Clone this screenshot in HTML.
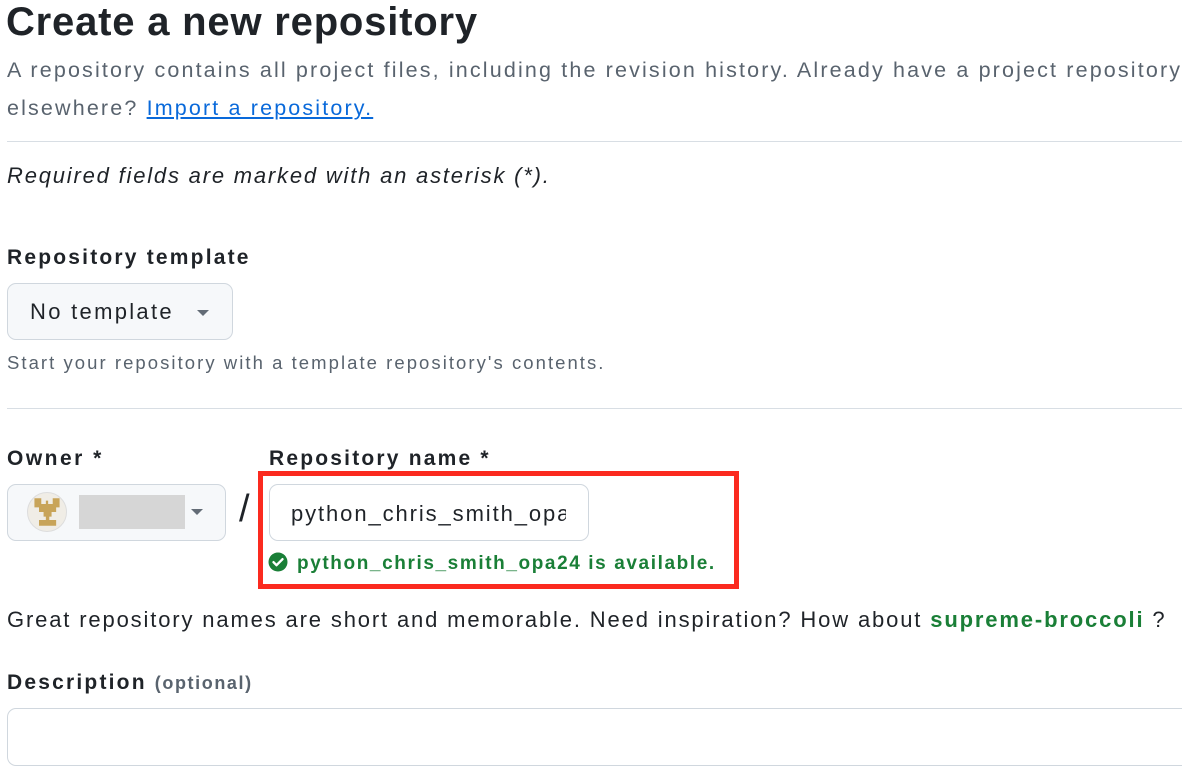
<!DOCTYPE html>
<html><head><meta charset="utf-8"><style>
*{margin:0;padding:0;box-sizing:border-box}
body{width:1182px;height:784px;overflow:hidden;background:#fff;font-family:"Liberation Sans",Arial,sans-serif;color:#1f2328;position:relative}
.a{position:absolute;line-height:1;white-space:nowrap;letter-spacing:2px}
.hr{position:absolute;left:7px;right:0;height:1px;background:#d8dee4}
.b{font-weight:bold}
.box{position:absolute;border:1px solid #d0d7de;border-radius:9px}
.caret{position:absolute;width:0;height:0;border-left:6px solid transparent;border-right:6px solid transparent;border-top:6px solid #636c76}
</style></head><body>
<div class="a b" style="left:6px;top:2px;font-size:40px;letter-spacing:0.8px">Create a new repository</div>
<div class="a" style="left:7px;top:60px;font-size:21.5px;color:#59636e;letter-spacing:2.15px">A repository contains all project files, including the revision history. Already have a project repository</div>
<div class="a" style="left:7px;top:98px;font-size:21.5px;color:#59636e;letter-spacing:2.15px">elsewhere? <span style="color:#0969da;text-decoration:underline">Import a repository.</span></div>
<div class="hr" style="top:141px"></div>
<div class="a" style="left:7px;top:165px;font-size:22px;font-style:italic;letter-spacing:1.8px">Required fields are marked with an asterisk (*).</div>
<div class="a b" style="left:7px;top:247px;font-size:21px;letter-spacing:2.2px">Repository template</div>
<div class="box" style="left:7px;top:283px;width:226px;height:57px;background:#f6f8fa"></div>
<div class="a" style="left:30px;top:301px;font-size:22px;letter-spacing:2.3px">No template</div>
<div class="caret" style="left:197px;top:310px"></div>
<div class="a" style="left:7px;top:354px;font-size:18.5px;color:#59636e;letter-spacing:2.05px">Start your repository with a template repository's contents.</div>
<div class="hr" style="top:408px"></div>
<div class="a b" style="left:7px;top:448px;font-size:21px;letter-spacing:2.5px">Owner *</div>
<div class="a b" style="left:269px;top:448px;font-size:21px;letter-spacing:2.2px">Repository name *</div>
<div class="box" style="left:7px;top:484px;width:219px;height:57px;background:#f6f8fa"></div>
<div style="position:absolute;left:27px;top:492px;width:40px;height:40px;border-radius:50%;background:#f0ede6;border:1px solid #ddd"></div>
<svg style="position:absolute;left:31px;top:496px" width="32" height="32" viewBox="0 0 28 28"><path fill="#c8a459" d="M3 2h6v5h4v-3h2v3h4V2h6v8h-3v4h-4v4h-2v3h6v5H7v-5h6v-3h-2v-4H7v-4H3z"/></svg>
<div style="position:absolute;left:79px;top:495px;width:106px;height:34px;background:#d6d6d6"></div>
<div class="caret" style="left:191px;top:509px"></div>
<div class="a" style="left:239px;top:490px;font-size:38px">/</div>
<div style="position:absolute;left:258px;top:471px;width:481px;height:118px;border:5px solid #fb2a1f"></div>
<div class="box" style="left:269px;top:484px;width:320px;height:57px;background:#fff;overflow:hidden"><div style="position:absolute;left:21px;top:0;width:275px;height:55px;overflow:hidden"><div class="a" style="left:0;top:18px;font-size:22px;letter-spacing:1.9px">python_chris_smith_opa24</div></div></div>
<svg style="position:absolute;left:268px;top:552px" width="20" height="20" viewBox="0 0 20 20"><circle cx="10" cy="10" r="9.5" fill="#1a7f37"/><path d="M5.5 10.2l3 3 6-6" stroke="#fff" stroke-width="2.4" fill="none" stroke-linecap="round" stroke-linejoin="round"/></svg>
<div class="a b" style="left:297px;top:554px;font-size:19px;color:#1a7f37;letter-spacing:1.6px">python_chris_smith_opa24 is available.</div>
<div class="a" style="left:7px;top:609px;font-size:22px;letter-spacing:1.85px">Great repository names are short and memorable. Need inspiration? How about <span class="b" style="color:#1a7f37">supreme-broccoli</span> ?</div>
<div class="a b" style="left:7px;top:672px;font-size:21px;letter-spacing:2.2px">Description <span style="font-size:18px;color:#59636e;letter-spacing:1.6px">(optional)</span></div>
<div class="box" style="left:7px;top:708px;width:1190px;height:58px;background:#fff"></div>
</body></html>
